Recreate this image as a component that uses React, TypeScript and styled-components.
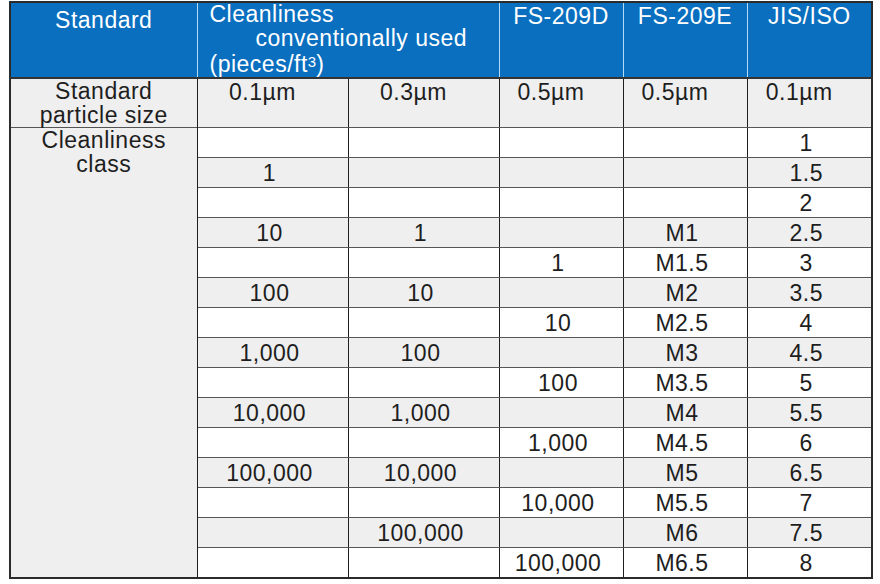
import React from 'react';
import styled, { createGlobalStyle } from 'styled-components';

const GlobalStyle = createGlobalStyle`
  body {
    margin: 0;
    background: #ffffff;
  }
`;

const Table = styled.table`
  border-collapse: collapse;
  table-layout: fixed;
  width: 862px;
  margin: 1px 0 0 9px;
  border: 2px solid #2b2b2b;
  font-family: "Liberation Sans", Arial, sans-serif;
  font-size: 23px;
  letter-spacing: 0.5px;
  color: #1e1e1e;
`;

const HeadRow = styled.tr`
  height: 73px;
`;

const HeadCell = styled.th<{ $top: number; $left?: boolean }>`
  background: #0a6fbf;
  color: #ffffff;
  font-weight: normal;
  line-height: 23.5px;
  vertical-align: top;
  text-align: ${(p) => (p.$left ? 'left' : 'center')};
  padding: ${(p) => p.$top}px 0 0 ${(p) => (p.$left ? 12 : 0)}px;
  border-left: 1px solid #b4dbf5;
  border-bottom: 2px solid #333333;
`;

const HeadLine = styled.span<{ $indent?: number }>`
  display: block;
  padding-left: ${(p) => p.$indent ?? 0}px;
  white-space: nowrap;
`;

const Sup = styled.span`
  font-size: 15px;
  vertical-align: 5px;
  letter-spacing: 0;
`;

const SizeRow = styled.tr`
  height: 49px;
`;

const DataRow = styled.tr`
  height: 29px;
`;

const Label = styled.td`
  background: #efefef;
  text-align: center;
  vertical-align: top;
  line-height: 24px;
  padding: 0;
  border-top: 1px solid #555555;
  border-right: 1px solid #1e1e1e;
`;

const Cell = styled.td<{ $shade?: boolean; $unit?: boolean }>`
  background: ${(p) => (p.$shade ? '#efefef' : '#ffffff')};
  text-align: center;
  vertical-align: ${(p) => (p.$unit ? 'top' : 'middle')};
  line-height: ${(p) => (p.$unit ? '24px' : '27px')};
  padding: ${(p) => (p.$unit ? '1px 20px 0 0' : '2px 6px 0 0')};
  border-top: 1px solid #555555;
  border-bottom: 1px solid #555555;
  border-left: 1px solid #1e1e1e;
  border-right: 1px solid #1e1e1e;
  white-space: nowrap;
`;

const rows: string[][] = [
  ['', '', '', '', '1'],
  ['1', '', '', '', '1.5'],
  ['', '', '', '', '2'],
  ['10', '1', '', 'M1', '2.5'],
  ['', '', '1', 'M1.5', '3'],
  ['100', '10', '', 'M2', '3.5'],
  ['', '', '10', 'M2.5', '4'],
  ['1,000', '100', '', 'M3', '4.5'],
  ['', '', '100', 'M3.5', '5'],
  ['10,000', '1,000', '', 'M4', '5.5'],
  ['', '', '1,000', 'M4.5', '6'],
  ['100,000', '10,000', '', 'M5', '6.5'],
  ['', '', '10,000', 'M5.5', '7'],
  ['', '100,000', '', 'M6', '7.5'],
  ['', '', '100,000', 'M6.5', '8'],
];

const sizes = ['0.1µm', '0.3µm', '0.5µm', '0.5µm', '0.1µm'];

export default function App() {
  return (
    <>
      <GlobalStyle />
      <Table>
        <colgroup>
          <col style={{ width: 187 }} />
          <col style={{ width: 151 }} />
          <col style={{ width: 151 }} />
          <col style={{ width: 124 }} />
          <col style={{ width: 124 }} />
          <col style={{ width: 125 }} />
        </colgroup>
        <thead>
          <HeadRow>
            <HeadCell $top={6}>Standard</HeadCell>
            <HeadCell $top={0} $left colSpan={2}>
              <HeadLine>Cleanliness</HeadLine>
              <HeadLine $indent={46}>conventionally used</HeadLine>
              <HeadLine>
                (pieces/ft<Sup>3</Sup>)
              </HeadLine>
            </HeadCell>
            <HeadCell $top={2}>FS-209D</HeadCell>
            <HeadCell $top={2}>FS-209E</HeadCell>
            <HeadCell $top={2}>JIS/ISO</HeadCell>
          </HeadRow>
        </thead>
        <tbody>
          <SizeRow>
            <Label>
              Standard
              <br />
              particle size
            </Label>
            {sizes.map((s, i) => (
              <Cell key={i} $shade $unit>
                {s}
              </Cell>
            ))}
          </SizeRow>
          {rows.map((row, r) => (
            <DataRow key={r}>
              {r === 0 && (
                <Label rowSpan={rows.length}>
                  Cleanliness
                  <br />
                  class
                </Label>
              )}
              {row.map((v, c) => (
                <Cell key={c} $shade={r % 2 === 1}>
                  {v}
                </Cell>
              ))}
            </DataRow>
          ))}
        </tbody>
      </Table>
    </>
  );
}
